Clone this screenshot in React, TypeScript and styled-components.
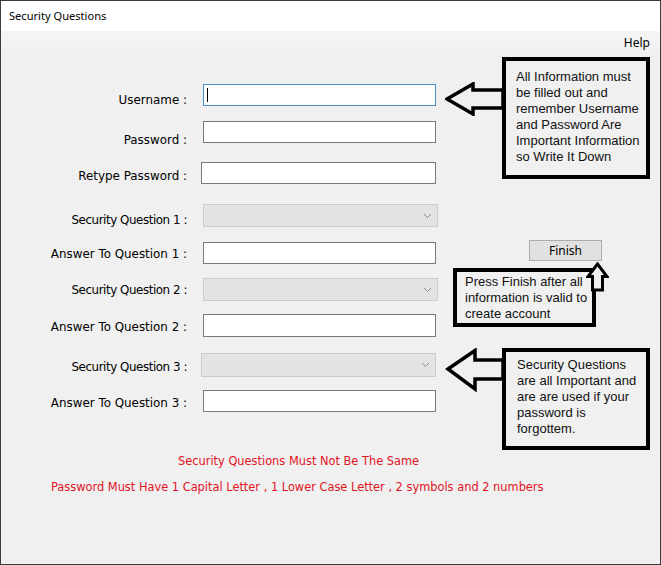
import React from "react";
import styled, { createGlobalStyle } from "styled-components";

const Global = createGlobalStyle`
  html, body { margin: 0; padding: 0; background: #f0f0f0; }
  * { box-sizing: border-box; }
`;

const labelFont = `"DejaVu Sans", "Liberation Sans", sans-serif`;
const uiFont = `"Noto Sans", "Liberation Sans", sans-serif`;
const noteFont = `"Liberation Sans", Arial, sans-serif`;

const Window = styled.div`
  width: 661px;
  height: 565px;
  border: 1px solid #3c3c3c;
  background: #f0f0f0;
  display: flex;
  flex-direction: column;
  overflow: hidden;
`;

const TitleBar = styled.div`
  height: 30px;
  flex: none;
  background: #ffffff;
  display: flex;
  align-items: center;
  padding: 0 0 2px 8px;
  font: 11.1px ${uiFont};
  color: #000;
`;

const MenuStrip = styled.div`
  height: 21px;
  flex: none;
  display: flex;
  justify-content: flex-end;
  align-items: center;
  padding: 1px 10px 0 0;
  background: linear-gradient(#f5f5f5, #f0f0f0);
  font: 12px ${uiFont};
  color: #000;
`;

const Body = styled.div`
  flex: 1;
  display: flex;
`;

const FormCol = styled.div`
  width: 444px;
  flex: none;
  display: flex;
  flex-direction: column;
`;

const Row = styled.div<{ $top: number; $h: number }>`
  display: flex;
  align-items: flex-start;
  height: ${(p) => p.$h}px;
  margin-top: ${(p) => p.$top}px;
`;

const Label = styled.div<{ $dy: number; $tight?: boolean }>`
  width: 186px;
  flex: none;
  text-align: right;
  white-space: nowrap;
  height: 13px;
  margin-top: ${(p) => p.$dy}px;
  font: 11.9px/13px ${labelFont};
  letter-spacing: ${(p) => (p.$tight ? "-0.45px" : "0")};
  color: #000;
`;

const TextBox = styled.div<{ $left: number; $w: number; $h: number; $focus?: boolean }>`
  margin-left: ${(p) => p.$left}px;
  width: ${(p) => p.$w}px;
  height: ${(p) => p.$h}px;
  background: #ffffff;
  border: 1px solid ${(p) => (p.$focus ? "#4d8cc4" : "#7a7a7a")};
  position: relative;
`;

const Caret = styled.span`
  position: absolute;
  left: 3px;
  top: 3px;
  width: 1px;
  height: 14px;
  background: #000;
`;

const Combo = styled.div<{ $left: number; $w: number; $h: number }>`
  margin-left: ${(p) => p.$left}px;
  width: ${(p) => p.$w}px;
  height: ${(p) => p.$h}px;
  background: #e3e3e3;
  border: 1px solid #cccccc;
  display: flex;
  align-items: center;
  justify-content: flex-end;
  padding-right: 5px;
`;

const Notes = styled.div`
  margin-top: 43px;
  display: flex;
  flex-direction: column;
  gap: 13px;
`;

const Warn = styled.div<{ $left: number }>`
  padding-left: ${(p) => p.$left}px;
  font: 11.4px/13px ${labelFont};
  color: #e0141f;
  white-space: nowrap;
`;

const SideCol = styled.div`
  flex: 1;
  display: flex;
  flex-direction: column;
`;

const CalloutRow = styled.div<{ $top: number }>`
  display: flex;
  align-items: flex-start;
  margin-top: ${(p) => p.$top}px;
`;

const ArrowSvg = styled.svg<{ $dy: number }>`
  display: block;
  flex: none;
  margin-top: ${(p) => p.$dy}px;
  margin-right: -1px;
  position: relative;
  z-index: 1;
`;

const NoteBox = styled.div<{ $w: number; $h: number; $pl: number; $pt: number }>`
  width: ${(p) => p.$w}px;
  height: ${(p) => p.$h}px;
  border: 4px solid #000;
  background: #f0f0f0;
  padding: ${(p) => p.$pt}px 4px 0 ${(p) => p.$pl}px;
  font: 13px/16px ${noteFont};
  color: #111;
`;

const FinishButton = styled.button`
  margin: 61px 0 0 84px;
  width: 73px;
  height: 21px;
  padding: 0;
  background: #e1e1e1;
  border: 1px solid #adadad;
  font: 12px ${uiFont};
  color: #000;
`;

const Callout2 = styled.div`
  position: relative;
  margin: 7px 0 0 8px;
  width: 143px;
`;

const UpArrow = styled.svg`
  position: absolute;
  left: 133px;
  top: -6px;
  display: block;
`;

const Chevron = () => (
  <svg width="9" height="6" viewBox="0 0 9 6">
    <path d="M1 1 L4.5 4.5 L8 1" fill="none" stroke="#8a8a8a" strokeWidth="1" />
  </svg>
);

type RowDef = {
  label: string;
  kind: "text" | "combo";
  top: number;
  h: number;
  left: number;
  w: number;
  dy: number;
  focus?: boolean;
};

const rows: RowDef[] = [
  { label: "Username :", kind: "text", top: 32, h: 22, left: 16, w: 233, dy: 10, focus: true },
  { label: "Password :", kind: "text", top: 15, h: 22, left: 16, w: 233, dy: 13 },
  { label: "Retype Password :", kind: "text", top: 19, h: 22, left: 14, w: 235, dy: 8 },
  { label: "Security Question 1 :", kind: "combo", top: 20, h: 23, left: 16, w: 235, dy: 10 },
  { label: "Answer To Question 1 :", kind: "text", top: 15, h: 22, left: 16, w: 233, dy: 6 },
  { label: "Security Question 2 :", kind: "combo", top: 14, h: 23, left: 16, w: 235, dy: 6 },
  { label: "Answer To Question 2 :", kind: "text", top: 13, h: 23, left: 16, w: 233, dy: 7 },
  { label: "Security Question 3 :", kind: "combo", top: 16, h: 24, left: 14, w: 235, dy: 8 },
  { label: "Answer To Question 3 :", kind: "text", top: 13, h: 22, left: 16, w: 233, dy: 7 },
];

export default function App() {
  return (
    <>
      <Global />
      <Window>
        <TitleBar>Security Questions</TitleBar>
        <MenuStrip>Help</MenuStrip>
        <Body>
          <FormCol>
            {rows.map((r) => (
              <Row key={r.label} $top={r.top} $h={r.h}>
                <Label $dy={r.dy} $tight={r.kind === "combo"}>
                  {r.label}
                </Label>
                {r.kind === "text" ? (
                  <TextBox $left={r.left} $w={r.w} $h={r.h} $focus={r.focus}>
                    {r.focus && <Caret />}
                  </TextBox>
                ) : (
                  <Combo $left={r.left} $w={r.w} $h={r.h}>
                    <Chevron />
                  </Combo>
                )}
              </Row>
            ))}
            <Notes>
              <Warn $left={177}>Security Questions Must Not Be The Same</Warn>
              <Warn $left={50}>
                Password Must Have 1 Capital Letter , 1 Lower Case Letter , 2 symbols and 2 numbers
              </Warn>
            </Notes>
          </FormCol>
          <SideCol>
            <CalloutRow $top={5}>
              <ArrowSvg $dy={25} width="58" height="34" viewBox="0 0 58 34">
                <polygon
                  points="2,17 28,2 28,8 58,8 58,26 28,26 28,32"
                  fill="#f0f0f0"
                  stroke="#000"
                  strokeWidth="3.5"
                  strokeLinejoin="miter"
                />
              </ArrowSvg>
              <NoteBox $w={148} $h={122} $pl={10} $pt={8}>
                All Information must be filled out and remember Username and Password Are Important Information so Write It Down
              </NoteBox>
            </CalloutRow>
            <FinishButton>Finish</FinishButton>
            <Callout2>
              <NoteBox $w={143} $h={59} $pl={8} $pt={2}>
                Press Finish after all information is valid to create account
              </NoteBox>
              <UpArrow width="23" height="30" viewBox="0 0 23 30">
                <polygon
                  points="11.5,2 21,14.5 16.5,14.5 16.5,28 6.5,28 6.5,14.5 2,14.5"
                  fill="#f0f0f0"
                  stroke="#000"
                  strokeWidth="3"
                />
              </UpArrow>
            </Callout2>
            <CalloutRow $top={21}>
              <ArrowSvg $dy={0} width="58" height="44" viewBox="0 0 58 44">
                <polygon
                  points="3,21 30,2.5 30,12 58,12 58,31 30,31 30,41"
                  fill="#f0f0f0"
                  stroke="#000"
                  strokeWidth="3.5"
                />
              </ArrowSvg>
              <NoteBox $w={148} $h={102} $pl={11} $pt={5}>
                Security Questions are all Important and are are used if your password is forgottem.
              </NoteBox>
            </CalloutRow>
          </SideCol>
        </Body>
      </Window>
    </>
  );
}
